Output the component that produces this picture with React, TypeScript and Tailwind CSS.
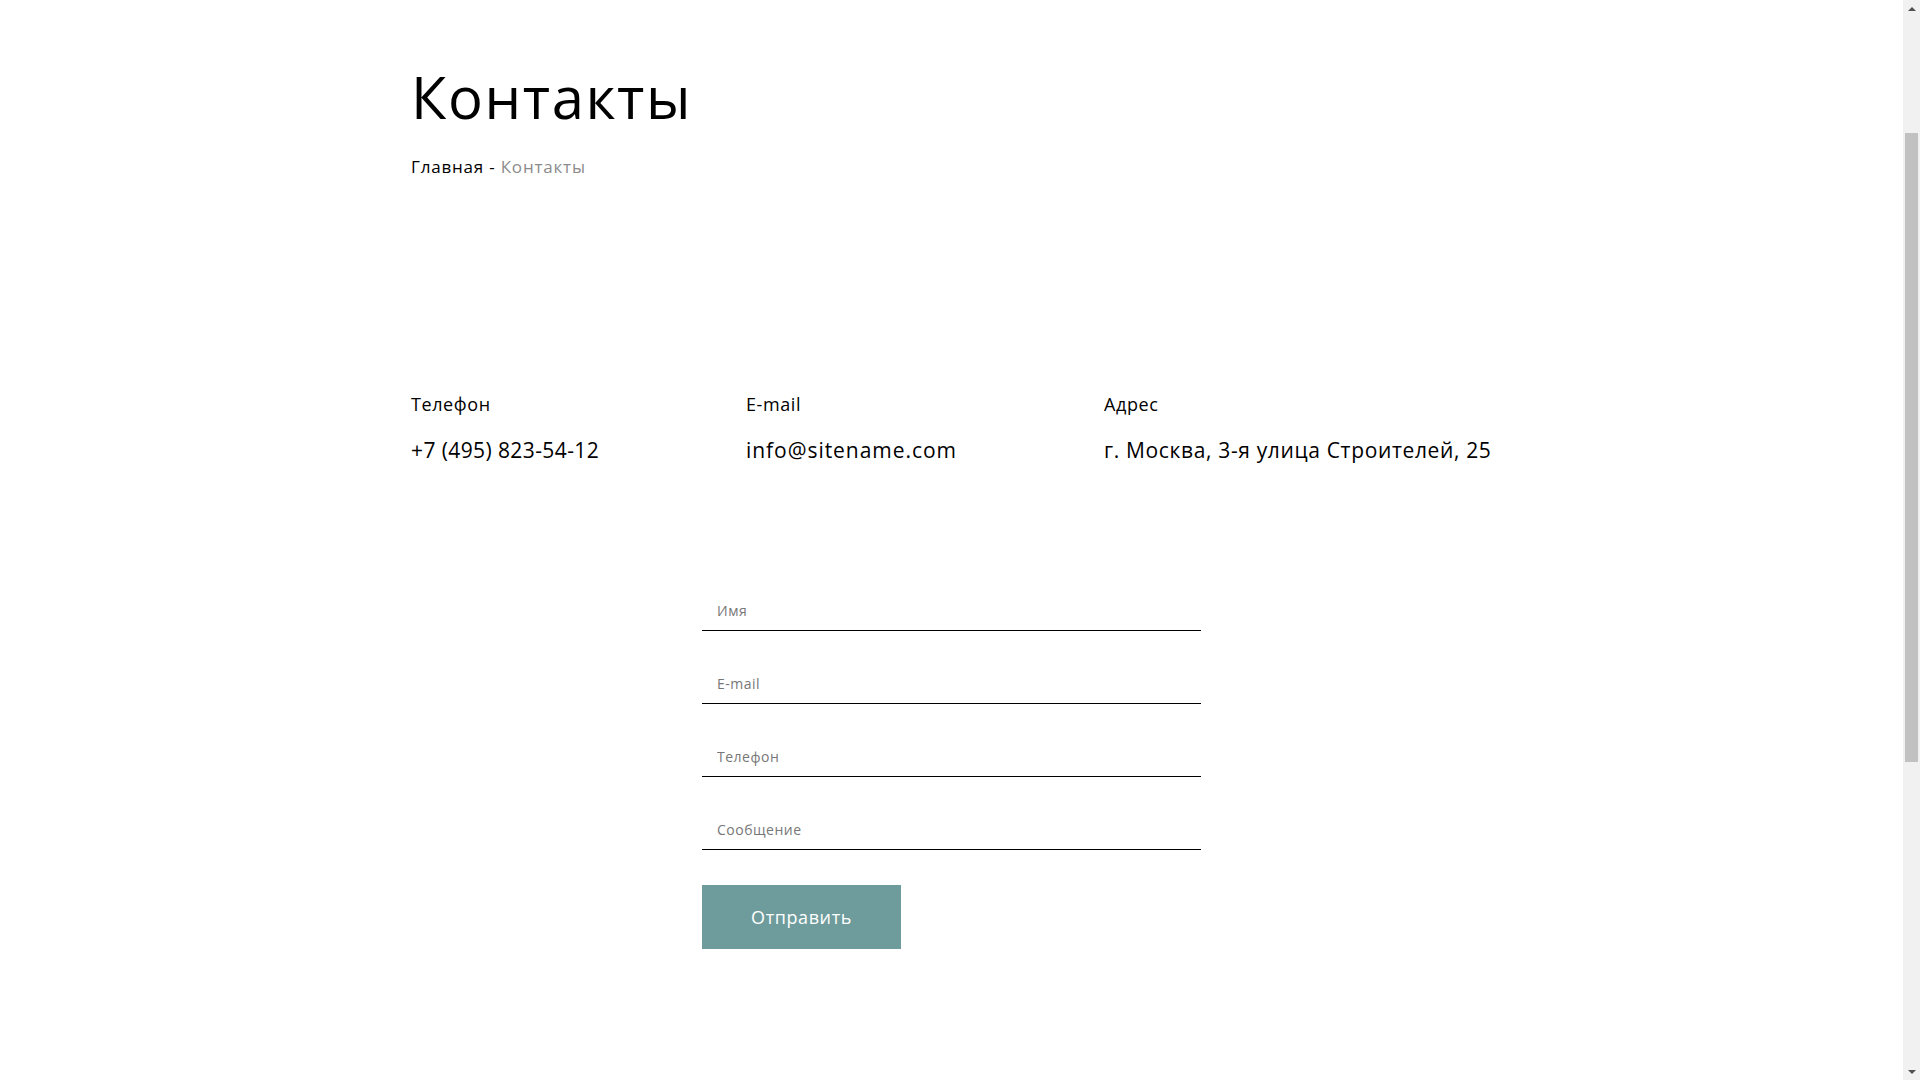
export default function App() {
  const fields = ["Имя", "E-mail", "Телефон", "Сообщение"];

  return (
    <div className="flex h-screen overflow-hidden bg-white text-black font-['Open_Sans',sans-serif]">
      <main className="flex-1 overflow-hidden">
        <div className="w-[1081px] mx-auto">
          <h1 className="text-[58px] leading-none font-normal tracking-[1.6px] mt-[68px]">Контакты</h1>
          <div className="text-[17px] leading-none tracking-[0.8px] mt-[32px]">
            <span>Главная - </span>
            <span className="text-[#8c8c8c]">Контакты</span>
          </div>

          <div className="flex mt-[220px]">
            <div className="w-[335px]">
              <div className="text-[18px] leading-none tracking-[0.6px]">Телефон</div>
              <div className="text-[21px] leading-none tracking-[0.4px] mt-[27px]">+7 (495) 823-54-12</div>
            </div>
            <div className="w-[358px]">
              <div className="text-[18px] leading-none tracking-[0.6px]">E-mail</div>
              <div className="text-[21px] leading-none tracking-[0.95px] mt-[27px]">info@sitename.com</div>
            </div>
            <div>
              <div className="text-[18px] leading-none tracking-[0.6px]">Адрес</div>
              <div className="text-[21px] leading-none tracking-[0.65px] mt-[27px]">г. Москва, 3-я улица Строителей, 25</div>
            </div>
          </div>
        </div>

        <form className="w-[499px] mx-auto mt-[129px] flex flex-col gap-[32px]">
          {fields.map((f) => (
            <input
              key={f}
              placeholder={f}
              className="block w-full h-[41px] border-b border-black pl-[15px] text-[14px] tracking-[0.5px] outline-none placeholder:text-[#777]"
            />
          ))}
          <button
            type="button"
            className="mt-[3px] w-[199px] h-[64px] bg-[#6e9c9c] text-white text-[18px] tracking-[0.6px]"
          >
            Отправить
          </button>
        </form>
      </main>

      <div className="w-[17px] h-screen bg-[#f1f1f1] flex flex-col">
        <div className="h-[17px] flex items-center justify-center">
          <div className="w-0 h-0 border-l-[4px] border-r-[4px] border-b-[4px] border-l-transparent border-r-transparent border-b-[#505050]" />
        </div>
        <div className="flex-1 px-[2px]">
          <div className="mt-[116px] h-[629px] bg-[#c1c1c1]" />
        </div>
        <div className="h-[17px] flex items-center justify-center">
          <div className="w-0 h-0 border-l-[4px] border-r-[4px] border-t-[4px] border-l-transparent border-r-transparent border-t-[#505050]" />
        </div>
      </div>
    </div>
  );
}
